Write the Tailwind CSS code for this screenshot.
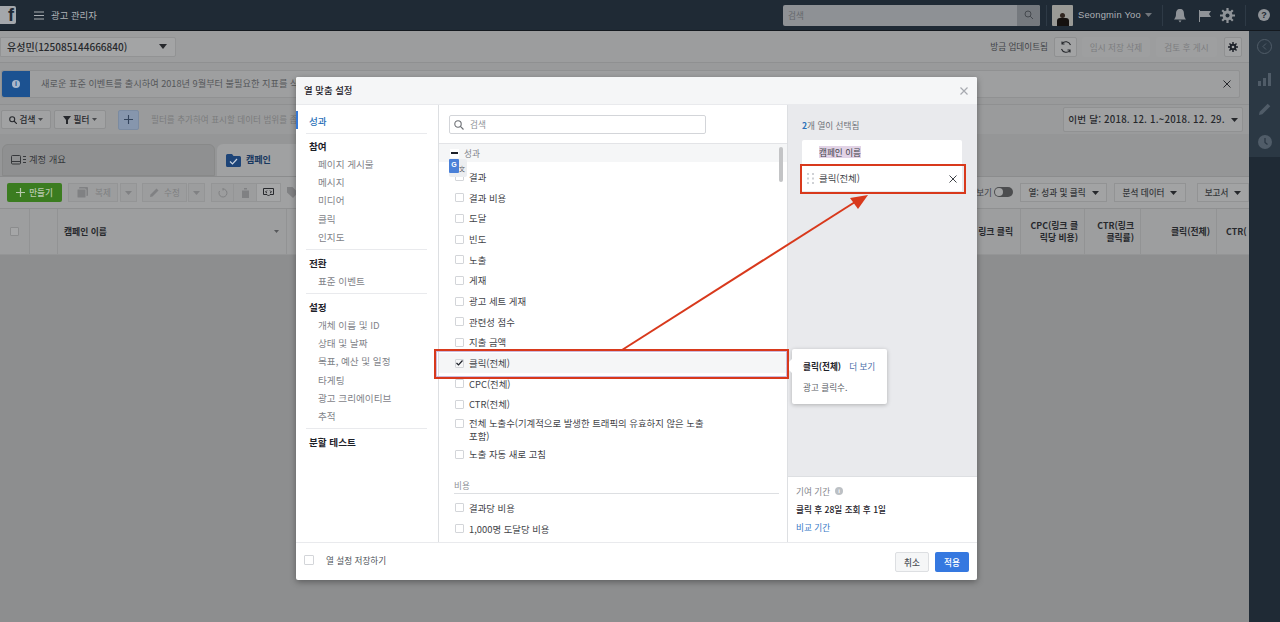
<!DOCTYPE html>
<html lang="ko">
<head>
<meta charset="UTF-8" />
<title>광고 관리자</title>
<script src="https://cdn.jsdelivr.net/npm/@tailwindcss/browser@4"></script>
</head>
<body class="relative w-[1280px] h-[622px] overflow-hidden whitespace-nowrap bg-[#8d8e8f] text-[8.6px] text-[#1d2129] font-['Noto_Sans_CJK_KR','Noto_Sans',sans-serif]">

<!-- Top bar -->
<header class="flex items-center h-[31px] pr-[10px] bg-[#1f2a35] border-b border-[#14191f] text-[#a9adb2]">
	<div class="w-[16px] h-[18px] bg-[#a4a7ab] rounded-r-[2px] flex items-center justify-end">
		<span class="text-[#1f2a35] font-bold text-[18px] leading-[18px] pr-[2px] font-['Liberation_Sans']">f</span>
	</div>
	<svg class="ml-[18px]" width="10" height="9" viewBox="0 0 10 9"><path d="M0 1h10M0 4.500h10M0 8h10" stroke="#a9adb2" stroke-width="1.100"/></svg>
	<span class="ml-[7px] text-[#b0b3b7] text-[9.400px]">광고 관리자</span>
	<div class="ml-auto w-[257px] h-[21px] flex justify-between bg-[#8e9195] rounded-[2px]">
		<span class="pl-[5px] leading-[21px] text-[#65686c]">검색</span>
		<div class="w-[23px] flex items-center justify-center bg-[#75797e] rounded-r-[2px]">
			<svg width="10" height="10" viewBox="0 0 10 10" fill="none" stroke="#45494e" stroke-width="1"><circle cx="4" cy="4" r="3"/><path d="M6.200 6.200L9 9"/></svg>
		</div>
	</div>
	<div class="ml-[6px] w-px h-[21px] bg-[#2e3a46]"></div>
	<div class="ml-[5px] w-[21px] h-[21px] bg-[#9a9a96] rounded-[1px] flex flex-col items-center justify-end overflow-hidden">
		<div class="w-[5px] h-[5px] rounded-full bg-[#30251f]"></div>
		<div class="w-[12px] h-[8px] bg-[#15110f] rounded-t-[3px]"></div>
	</div>
	<span class="ml-[5px] w-[61px] text-[#aeb1b5] font-['Liberation_Sans'] text-[9.400px] tracking-[0.2px]">Seongmin Yoo</span>
	<svg class="ml-[6px]" width="7" height="4"><path d="M0 0h7L3.500 4z" fill="#70757b"/></svg>
	<div class="ml-[10px] w-px h-[21px] bg-[#2e3a46]"></div>
	<svg class="ml-[10px]" width="14" height="15" viewBox="0 0 14 15"><path d="M7 1c3 0 4 2 4 5 0 3 1 4 2 5.500H1C2 10 3 9 3 6c0-3 1-5 4-5zM5.500 12.500h3L7 14.500z" fill="#8f9398"/></svg>
	<svg class="ml-[12px]" width="12" height="13" viewBox="0 0 12 13"><path d="M0 1h1v12H0zM1 2h11L10 5l2 3H1z" fill="#8f9398"/></svg>
	<svg class="ml-[9px]" width="15" height="15" viewBox="0 0 15 15"><circle cx="7.500" cy="7.500" r="3.500" fill="none" stroke="#8f9398" stroke-width="3"/><path d="M7.500 0v15M0 7.500h15M2.200 2.200l10.600 10.600M12.800 2.200L2.200 12.800" stroke="#8f9398" stroke-width="2.200"/><circle cx="7.500" cy="7.500" r="2" fill="#1f2a35"/></svg>
	<div class="ml-[10px] w-px h-[21px] bg-[#2e3a46]"></div>
	<div class="ml-[12px] w-[12px] h-[12px] rounded-full bg-[#8f9398] text-[#1f2a35] text-[9px] font-bold leading-[12px] text-center font-['Liberation_Sans']">?</div>
</header>

<div class="flex h-[591px]">
	<!-- Page under the dialog -->
	<main class="w-[1249px] shrink-0 overflow-hidden">
		<div class="h-[32px] bg-[#9c9d9e] border-b border-[#8f9091] flex items-center justify-between pl-0 pr-[7px]">
			<div class="w-[176px] h-[20px] bg-[#a3a4a5] border border-[#929394] rounded-r-[2px] flex items-center justify-between pl-[6px] pr-[8px] font-medium text-[#26282c]">
				<span class="text-[10px]">유성민(125085144666840)</span>
				<svg width="8" height="5"><path d="M0 0h8L4 5z" fill="#26282c"/></svg>
			</div>
			<div class="flex items-center text-[#3f4246]">
				<span>방금 업데이트됨</span>
				<div class="ml-[6px] w-[23px] h-[20px] bg-[#a2a3a4] border border-[#8f9091] rounded-[2px] flex items-center justify-center">
					<svg width="12" height="12" viewBox="0 0 12 12" fill="none" stroke="#26282c" stroke-width="1.100"><path d="M10.500 4A5 5 0 0 0 2 2.500M1.500 8A5 5 0 0 0 10 9.500M2 0.500v2.500h2.500M10 11.500V9H7.500"/></svg>
				</div>
				<div class="ml-[5px] w-[68px] h-[20px] bg-[#9e9fa0] rounded-[2px] text-center leading-[20px] text-[#7c7d7f]">임시 저장 삭제</div>
				<div class="ml-[6px] w-[61px] h-[20px] bg-[#9e9fa0] rounded-[2px] text-center leading-[20px] text-[#7c7d7f]">검토 후 게시</div>
				<div class="ml-[7px] w-[18px] h-[20px] bg-[#a2a3a4] border border-[#8f9091] rounded-[2px] flex items-center justify-center">
					<svg width="10" height="10" viewBox="0 0 15 15"><circle cx="7.500" cy="7.500" r="3.500" fill="none" stroke="#1d2129" stroke-width="3"/><path d="M7.500 0v15M0 7.500h15M2.200 2.200l10.600 10.600M12.800 2.200L2.200 12.800" stroke="#1d2129" stroke-width="2.200"/><circle cx="7.500" cy="7.500" r="2" fill="#a2a3a4"/></svg>
				</div>
			</div>
		</div>

		<div class="h-[42px] bg-[#999a9b] border-b border-[#8f9091] flex items-center pl-[1px] pr-[9px]">
			<div class="flex-1 h-[28px] bg-[#9e9fa0] border border-[#909192] rounded-[2px] flex items-center">
				<div class="w-[28px] h-full bg-[#1c5291] rounded-l-[2px] flex items-center justify-center">
					<div class="w-[8px] h-[8px] rounded-full bg-[#a9b8cb] text-[#1c5291] text-[7px] font-bold leading-[8px] text-center font-['Liberation_Sans']">i</div>
				</div>
				<span class="ml-[11px] text-[#55575a] text-[9.200px]">새로운 표준 이벤트를 출시하여 2018년 9월부터 불필요한 지표를 삭제합니다</span>
				<svg class="ml-auto mr-[8px]" width="8" height="8" viewBox="0 0 8 8"><path d="M0.500 0.500l7 7M7.500 0.500l-7 7" stroke="#26282c" stroke-width="1"/></svg>
			</div>
		</div>

		<div class="h-[29px] bg-[#9a9b9c] flex items-center pl-[1px] pr-[6px]">
			<div class="w-[50px] h-[19px] bg-[#a1a2a3] border border-[#8f9091] rounded-[2px] flex items-center justify-center gap-[3px] text-[#26282c] font-medium">
				<svg width="8" height="8" viewBox="0 0 8 8" fill="none" stroke="#26282c" stroke-width="1.100"><circle cx="3.200" cy="3.200" r="2.500"/><path d="M5 5l3 3"/></svg>검색<svg width="5" height="3"><path d="M0 0h5L2.500 3z" fill="#47494c"/></svg>
			</div>
			<div class="ml-[3px] w-[52px] h-[19px] bg-[#a1a2a3] border border-[#8f9091] rounded-[2px] flex items-center justify-center gap-[3px] text-[#26282c] font-medium">
				<svg width="8" height="8" viewBox="0 0 8 8"><path d="M0 0h8L5 4v4H3V4z" fill="#26282c"/></svg>필터<svg width="5" height="3"><path d="M0 0h5L2.500 3z" fill="#47494c"/></svg>
			</div>
			<div class="ml-[12px] w-[21px] h-[20px] bg-[#8696ad] border border-[#7b8ba1] rounded-[2px] flex items-center justify-center">
				<svg width="9" height="9"><path d="M4.500 0v9M0 4.500h9" stroke="#33445c" stroke-width="1.100"/></svg>
			</div>
			<span class="ml-[12px] text-[#7a7b7d]">필터를 추가하여 표시할 데이터 범위를 좁히세요</span>
			<div class="ml-auto w-[180px] h-[25px] bg-[#a0a1a2] border border-[#909192] rounded-[2px] flex items-center justify-center gap-[6px] font-medium text-[#26282c]">
				<span class="text-[9.600px] tracking-[0.2px]">이번 달: 2018. 12. 1.~2018. 12. 29.</span>
				<svg width="7" height="4"><path d="M0 0h7L3.500 4z" fill="#26282c"/></svg>
			</div>
		</div>

		<div class="h-[43px] bg-[#959697] flex items-end pl-[2px] gap-[2px] border-b border-[#8b8c8d]">
			<div class="w-[213px] h-[32px] bg-[#8f9091] rounded-t-[6px] border border-[#888989] flex items-center pl-[8px] gap-[3px] text-[#36383b]">
				<svg width="15" height="10" viewBox="0 0 15 10" fill="none" stroke="#36383b"><rect x="0.500" y="0.500" width="9" height="8.500" rx="1"/><path d="M0.500 6.500h9M12 1.500h3M12 4.500h3M12 7.500h3"/></svg>
				<span class="text-[9.300px]">계정 개요</span>
			</div>
			<div class="w-[230px] h-[32px] bg-[#a0a1a2] rounded-t-[6px] flex items-center pl-[9px] gap-[5px] font-semibold text-[#17375f]">
				<svg width="15" height="13" viewBox="0 0 15 13"><path d="M0 1.500Q0 0 1.500 0H6l1.500 2H13.500Q15 2 15 3.500V11.500Q15 13 13.500 13H1.500Q0 13 0 11.500z" fill="#1d4478"/><path d="M4 7.500l2.500 2.500L11 5" stroke="#c8d2df" stroke-width="1.200" fill="none"/></svg>
				<span class="text-[9px]">캠페인</span>
			</div>
		</div>

		<div class="h-[32px] bg-[#a0a1a2] border-b border-[#8f9091] flex items-center pl-[7px] pr-0">
			<div class="w-[55px] h-[19px] bg-[#3b7c20] rounded-[2px] flex items-center justify-center gap-[4px] text-[#b8c9ae] font-medium">
				<svg width="9" height="9"><path d="M4.500 0v9M0 4.500h9" stroke="#b8c9ae" stroke-width="1.200"/></svg>만들기
			</div>
			<div class="ml-[6px] w-[50px] h-[19px] bg-[#9c9d9e] border border-[#949596] flex items-center pl-[8px] gap-[7px] text-[#7e7f81]">
				<svg width="11" height="11" viewBox="0 0 11 11"><rect x="2" y="0" width="9" height="9" rx="1" fill="#808183"/><rect x="0" y="2" width="9" height="9" rx="1" fill="#808183" stroke="#9c9d9e"/></svg>복제
			</div>
			<div class="ml-[2px] w-[17px] h-[19px] bg-[#9c9d9e] border border-[#949596] flex items-center justify-center"><svg width="7" height="4"><path d="M0 0h7L3.500 4z" fill="#808183"/></svg></div>
			<div class="ml-[5px] w-[45px] h-[19px] bg-[#9c9d9e] border border-[#949596] flex items-center pl-[7px] gap-[5px] text-[#7e7f81]">
				<svg width="9" height="9" viewBox="0 0 9 9"><path d="M0 9l0.500-2.500L6.500 0.500l2 2L2.500 8.500z" fill="#808183"/></svg>수정
			</div>
			<div class="ml-px w-[17px] h-[19px] bg-[#9c9d9e] border border-[#949596] flex items-center justify-center"><svg width="7" height="4"><path d="M0 0h7L3.500 4z" fill="#808183"/></svg></div>
			<div class="ml-[6px] w-[23px] h-[19px] bg-[#9c9d9e] border border-[#949596] flex items-center justify-center">
				<svg width="10" height="10" viewBox="0 0 10 10" fill="none" stroke="#808183"><path d="M5 1a4 4 0 1 1-3.500 2M5 0v2.500"/></svg>
			</div>
			<div class="w-[22px] h-[19px] bg-[#9c9d9e] border-y border-[#949596] flex items-center justify-center">
				<svg width="9" height="10" viewBox="0 0 9 10"><path d="M0 1.500h9M1 2.500h7v7.500H1zM3 0h3v1.500H3z" fill="#808183"/></svg>
			</div>
			<div class="w-[25px] h-[19px] bg-[#a5a6a7] border border-[#949596] flex items-center justify-center">
				<svg width="11" height="10" viewBox="0 0 11 10" fill="none" stroke="#26282c"><path d="M0.500 0.500h10v6H7L5.500 8 4 6.500H0.500z"/><path d="M4 2.500L2.500 4 4 5M7 2.500L8.500 4 7 5"/></svg>
			</div>
			<div class="w-[22px] h-[19px] flex items-center justify-center">
				<svg width="11" height="11" viewBox="0 0 11 11"><path d="M0 0h5.500L11 5.500 6 11 0 5.500z" fill="#808183"/></svg>
			</div>
			<div class="ml-auto flex items-center text-[#3f4246]">
				<span class="w-[19px] text-right">보기</span>
				<div class="ml-[2px] w-[19px] h-[10px] rounded-full bg-[#4c4d4f] flex items-center pl-px"><div class="w-[8px] h-[8px] rounded-full bg-[#a3a4a5]"></div></div>
			</div>
			<div class="ml-[7px] w-[87px] h-[19px] shrink-0 bg-[#a2a3a4] border border-[#929394] flex items-center justify-center gap-[6px] font-medium text-[#36383b]">열: 성과 및 클릭<svg width="7" height="4"><path d="M0 0h7L3.500 4z" fill="#26282c"/></svg></div>
			<div class="ml-[7px] w-[72px] h-[19px] shrink-0 bg-[#a2a3a4] border border-[#929394] flex items-center justify-center gap-[6px] font-medium text-[#36383b]">분석 데이터<svg width="7" height="4"><path d="M0 0h7L3.500 4z" fill="#26282c"/></svg></div>
			<div class="ml-[11px] w-[52px] h-[19px] shrink-0 bg-[#a2a3a4] border border-[#929394] flex items-center justify-center gap-[6px] font-medium text-[#36383b]">보고서<svg width="7" height="4"><path d="M0 0h7L3.500 4z" fill="#26282c"/></svg></div>
		</div>

		<!-- Table header -->
		<div class="h-[46px] bg-[#9d9e9f] border-b border-[#949596] flex font-semibold text-[#26282c] text-[8.800px]">
			<div class="w-[30px] border-r border-[#929394] flex items-center justify-center"><div class="w-[9px] h-[9px] bg-[#a5a6a7] border border-[#8b8c8d] rounded-[1px]"></div></div>
			<div class="w-[28px] border-r border-[#929394]"></div>
			<div class="w-[229px] border-r border-[#929394] flex items-center justify-between pl-[6px] pr-[7px]">
				<span>캠페인 이름</span>
				<svg width="5" height="3"><path d="M0 0h5L2.500 3z" fill="#56585b"/></svg>
			</div>
			<div class="w-[734px] border-r border-[#929394] flex items-center justify-end pr-[7px]">링크 클릭</div>
			<div class="w-[64px] border-r border-[#929394] flex items-center justify-end pr-[6px] text-right leading-[12px]">CPC(링크 클<br />릭당 비용)</div>
			<div class="w-[56px] border-r border-[#929394] flex items-center justify-end pr-[6px] text-right leading-[12px]">CTR(링크<br />클릭률)</div>
			<div class="w-[76px] border-r border-[#929394] flex items-center justify-end pr-[6px]">클릭(전체)</div>
			<div class="flex-1 flex items-center pl-[9px] overflow-hidden">CTR(</div>
		</div>
	</main>

	<!-- Right rail -->
	<aside class="flex-1 bg-[#1f2a35]">
		<div class="h-[126px] bg-[#2b3844] flex flex-col items-center">
			<div class="mt-[8px] w-[15px] h-[15px] rounded-full border border-[#505c68] flex items-center justify-center">
				<svg width="5" height="7" fill="none" stroke="#505c68"><path d="M4 0.500L1 3.500l3 3"/></svg>
			</div>
			<svg class="mt-[19px]" width="14" height="13"><path d="M0 8h3v5H0zM5 5h3v8H5zM10 0h3v13h-3z" fill="#505c68"/></svg>
			<svg class="mt-[17px]" width="12" height="12" viewBox="0 0 9 9"><path d="M0 9l0.500-2.500L6.500 0.500l2 2L2.500 8.500z" fill="#505c68"/></svg>
			<div class="mt-[20px] w-[14px] h-[14px] rounded-full bg-[#505c68] relative">
				<svg class="absolute left-0 top-0" width="14" height="14" fill="none" stroke="#2b3844" stroke-width="1.300"><path d="M7 3v4.500l2.500 2"/></svg>
			</div>
		</div>
	</aside>
</div>

<!-- Dialog -->
<section class="absolute left-[296px] top-[77px] w-[681px] h-[503px] bg-white rounded-[2px] shadow-[0_2px_6px_rgba(0,0,0,0.35)] flex flex-col overflow-hidden">
	<div class="h-[28px] shrink-0 bg-[#f5f6f7] border-b border-[#e9eaed] flex items-center justify-between pl-[8px] pr-[9px]">
		<span class="text-[#1d2129] font-medium text-[9.400px]">열 맞춤 설정</span>
		<svg width="8" height="8" viewBox="0 0 8 8"><path d="M0.500 0.500l7 7M7.500 0.500l-7 7" stroke="#a7aab0" stroke-width="1.200"/></svg>
	</div>
	<div class="flex flex-1 min-h-0">
		<!-- Sections -->
		<nav class="w-[143px] shrink-0 border-r border-[#dddfe2] text-[#7f8389] text-[9.600px] pl-[10px] pr-[11px]">
			<div class="relative h-[29px] pt-[4px] flex items-center pl-[3px] text-[#2a71b8] font-medium border-b border-[#e9eaed]">
				<span class="absolute left-[-10px] top-[6px] w-[2px] h-[18px] bg-[#3578d6]"></span>성과
			</div>
			<div class="h-[116px] border-b border-[#e9eaed] pl-[3px]">
				<div class="h-[21px] pt-[5px] leading-[14px] text-[#1d2129] font-semibold">참여</div>
				<ul class="pl-[9px] leading-[18.200px]">
					<li>페이지 게시물</li><li>메시지</li><li>미디어</li><li>클릭</li><li>인지도</li>
				</ul>
			</div>
			<div class="h-[44px] border-b border-[#e9eaed] pl-[3px]">
				<div class="h-[22px] pt-[6px] leading-[14px] text-[#1d2129] font-semibold">전환</div>
				<div class="pl-[9px] leading-[18px]">표준 이벤트</div>
			</div>
			<div class="h-[135px] border-b border-[#e9eaed] pl-[3px]">
				<div class="h-[22px] pt-[6px] leading-[14px] text-[#1d2129] font-semibold">설정</div>
				<ul class="pl-[9px] leading-[18.200px]">
					<li>개체 이름 및 ID</li><li>상태 및 날짜</li><li>목표, 예산 및 일정</li><li>타게팅</li><li>광고 크리에이티브</li><li>추적</li>
				</ul>
			</div>
			<div class="h-[26px] pl-[3px] flex items-center text-[#1d2129] font-semibold">분할 테스트</div>
		</nav>

		<!-- Column list -->
		<div class="w-[348px] shrink-0 relative overflow-hidden text-[9.400px]">
			<div class="ml-[10px] mt-[10px] w-[257px] h-[19px] border border-[#d3d5d9] rounded-[2px] flex items-center pl-[4px] gap-[6px] text-[#8d9096] text-[8.600px]">
				<svg width="10" height="10" viewBox="0 0 10 10" fill="none" stroke="#6b6e73" stroke-width="1.100"><circle cx="4" cy="4" r="3.200"/><path d="M6.400 6.400L9.500 9.500"/></svg>검색
			</div>
			<div class="mt-[9px] h-[19px] bg-[#f5f6f7] border-t border-[#e3e4e7] flex items-center pl-[11px] text-[#7f8389] text-[8.600px]">
				<div class="w-[9px] h-[9px] bg-white flex items-center justify-center"><span class="w-[7px] h-[1.500px] bg-[#1d2129]"></span></div>
				<span class="ml-[5px]">성과</span>
			</div>
			<ul class="pl-[16px] pr-[80px] text-[#3f4348]">
				<li class="h-[25.300px] pt-[4.600px] flex items-center gap-[5px]"><span class="size-[9px] border border-[#d3d5d9] rounded-[1px]"></span>결과</li>
				<li class="h-[20.700px] flex items-center gap-[5px]"><span class="size-[9px] border border-[#d3d5d9] rounded-[1px]"></span>결과 비용</li>
				<li class="h-[20.700px] flex items-center gap-[5px]"><span class="size-[9px] border border-[#d3d5d9] rounded-[1px]"></span>도달</li>
				<li class="h-[20.700px] flex items-center gap-[5px]"><span class="size-[9px] border border-[#d3d5d9] rounded-[1px]"></span>빈도</li>
				<li class="h-[20.700px] flex items-center gap-[5px]"><span class="size-[9px] border border-[#d3d5d9] rounded-[1px]"></span>노출</li>
				<li class="h-[20.700px] flex items-center gap-[5px]"><span class="size-[9px] border border-[#d3d5d9] rounded-[1px]"></span>게재</li>
				<li class="h-[20.700px] flex items-center gap-[5px]"><span class="size-[9px] border border-[#d3d5d9] rounded-[1px]"></span>광고 세트 게재</li>
				<li class="h-[20.700px] flex items-center gap-[5px]"><span class="size-[9px] border border-[#d3d5d9] rounded-[1px]"></span>관련성 점수</li>
				<li class="h-[20.700px] flex items-center gap-[5px]"><span class="size-[9px] border border-[#d3d5d9] rounded-[1px]"></span>지출 금액</li>
				<li class="h-[20.700px] flex items-center gap-[5px] -ml-[16px] -mr-[80px] pl-[16px] bg-[#f5f6f7]">
					<span class="size-[9px] border border-[#d3d5d9] rounded-[1px] flex items-center justify-center"><svg width="7" height="6" fill="none" stroke="#1d2129" stroke-width="1.200"><path d="M0.500 3l2 2 4-4.500"/></svg></span>클릭(전체)
				</li>
				<li class="h-[20.700px] flex items-center gap-[5px]"><span class="size-[9px] border border-[#d3d5d9] rounded-[1px]"></span>CPC(전체)</li>
				<li class="h-[20.700px] flex items-center gap-[5px]"><span class="size-[9px] border border-[#d3d5d9] rounded-[1px]"></span>CTR(전체)</li>
				<li class="h-[29px] flex gap-[5px] items-start leading-[13px] pt-[2.500px]"><span class="size-[9px] mt-[2px] shrink-0 border border-[#d3d5d9] rounded-[1px]"></span><span>전체 노출수(기계적으로 발생한 트래픽의 유효하지 않은 노출<br />포함)</span></li>
				<li class="h-[20.700px] flex items-center gap-[5px]"><span class="size-[9px] border border-[#d3d5d9] rounded-[1px]"></span>노출 자동 새로 고침</li>
			</ul>
			<div class="ml-[15px] mr-[8px] mt-[14px] h-[15px] border-b border-[#dddfe2] text-[#8d9096] text-[8.600px] leading-[13px]">비용</div>
			<ul class="pl-[16px] mt-[4px] text-[#3f4348]">
				<li class="h-[20.700px] flex items-center gap-[5px]"><span class="size-[9px] border border-[#d3d5d9] rounded-[1px]"></span>결과당 비용</li>
				<li class="h-[20.700px] flex items-center gap-[5px]"><span class="size-[9px] border border-[#d3d5d9] rounded-[1px]"></span>1,000명 도달당 비용</li>
			</ul>
			<span class="absolute left-[340px] top-[42px] w-[4px] h-[35px] rounded-full bg-[#c3c4c6]"></span>
		</div>

		<!-- Selected columns -->
		<div class="flex-1 flex flex-col border-l border-[#dddfe2]">
			<div class="flex-1 bg-[#e9eaed] pl-[14px] pr-[15px] pt-[14px]">
				<p class="text-[#6d7177] leading-[13px]"><b class="text-[#2a71b8] font-semibold">2</b>개 열이 선택됨</p>
				<div class="mt-[8px] h-[24px] bg-white flex items-center pl-[17px] rounded-t-[2px] text-[#3f4348]"><span class="bg-[#e2d3e6] leading-[12px]">캠페인 이름</span></div>
				<div class="h-[25px] mt-[2px] bg-white flex items-center justify-between pl-[5px] pr-[5px] text-[#3f4348] text-[9.400px]">
					<span class="flex items-center gap-[5px]">
						<svg width="7" height="11"><path d="M0 0h2v2H0zM5 0h2v2H5zM0 4.500h2v2H0zM5 4.500h2v2H5zM0 9h2v2H0zM5 9h2v2H5z" fill="#cfd1d5"/></svg>클릭(전체)
					</span>
					<svg width="8" height="8" viewBox="0 0 8 8"><path d="M0.500 0.500l7 7M7.500 0.500l-7 7" stroke="#3f4348" stroke-width="1"/></svg>
				</div>
			</div>
			<div class="h-[66px] shrink-0 border-t border-[#dddfe2] pl-[8px] pt-[7px]">
				<p class="flex items-center gap-[5px] text-[#7f8389] leading-[14px]">기여 기간<span class="size-[8px] rounded-full bg-[#bcc0c4] text-white text-[6px] leading-[8px] text-center font-bold font-['Liberation_Sans']">i</span></p>
				<p class="mt-[4px] font-medium text-[#1d2129] leading-[14px]">클릭 후 28일 조회 후 1일</p>
				<p class="mt-[4px] text-[#3578c6] leading-[14px]">비교 기간</p>
			</div>
		</div>
	</div>
	<div class="h-[38px] shrink-0 border-t border-[#e9eaed] flex items-center pl-[8px] pr-[8px]">
		<span class="size-[10px] border border-[#d3d5d9] rounded-[1px] -mt-[3px]"></span>
		<span class="ml-[12px] -mt-[3px] text-[#4b4f56]">열 설정 저장하기</span>
		<div class="ml-auto w-[34px] h-[20px] bg-[#f5f6f7] border border-[#dddfe2] rounded-[2px] text-center leading-[18px] font-medium text-[#4b4f56]">취소</div>
		<div class="ml-[6px] w-[34px] h-[20px] bg-[#3578e0] rounded-[2px] text-center leading-[20px] font-medium text-white">적용</div>
	</div>
</section>

<!-- Translate widget over the list -->
<div class="absolute left-[449px] top-[159px] w-[18px] h-[18px] bg-[#eceef1] rounded-[2px] flex">
	<div class="w-[10px] h-[14px] bg-[#4a80d8] rounded-[1px] text-white text-[7px] leading-[12px] text-center font-bold font-['Liberation_Sans']">G</div>
	<span class="text-[6px] leading-[20px] text-[#5b6067]">文</span>
</div>

<!-- Tooltip -->
<div class="absolute left-[792px] top-[349px] w-[95px] h-[55px] bg-white rounded-[2px] shadow-[0_1px_4px_rgba(0,0,0,0.25)] pl-[11px] pt-[11px]">
	<span class="absolute left-[-5px] top-[12px] size-[10px] bg-white rotate-45"></span>
	<p class="relative leading-[13px]"><b class="font-semibold text-[#1d2129]">클릭(전체)</b><span class="ml-[8px] text-[#4a6ea9]">더 보기</span></p>
	<p class="mt-[8px] text-[#5d6167] leading-[13px]">광고 클릭수.</p>
</div>

<!-- Annotation: red boxes and arrow -->
<div class="absolute left-[434px] top-[349px] w-[355px] h-[30px] border-[2px] border-[#d8391c] shadow-[inset_0_0_0_1px_#cdb9dc]"></div>
<div class="absolute left-[800px] top-[164px] w-[166px] h-[30px] border-[2px] border-[#d8391c]"></div>
<svg class="absolute left-0 top-0 pointer-events-none" width="1280" height="622" fill="none">
	<path d="M622 350L855 202" stroke="#d8391c" stroke-width="2"/>
	<path d="M868 195L850 198L858 209z" fill="#d8391c"/>
</svg>
</body>
</html>
